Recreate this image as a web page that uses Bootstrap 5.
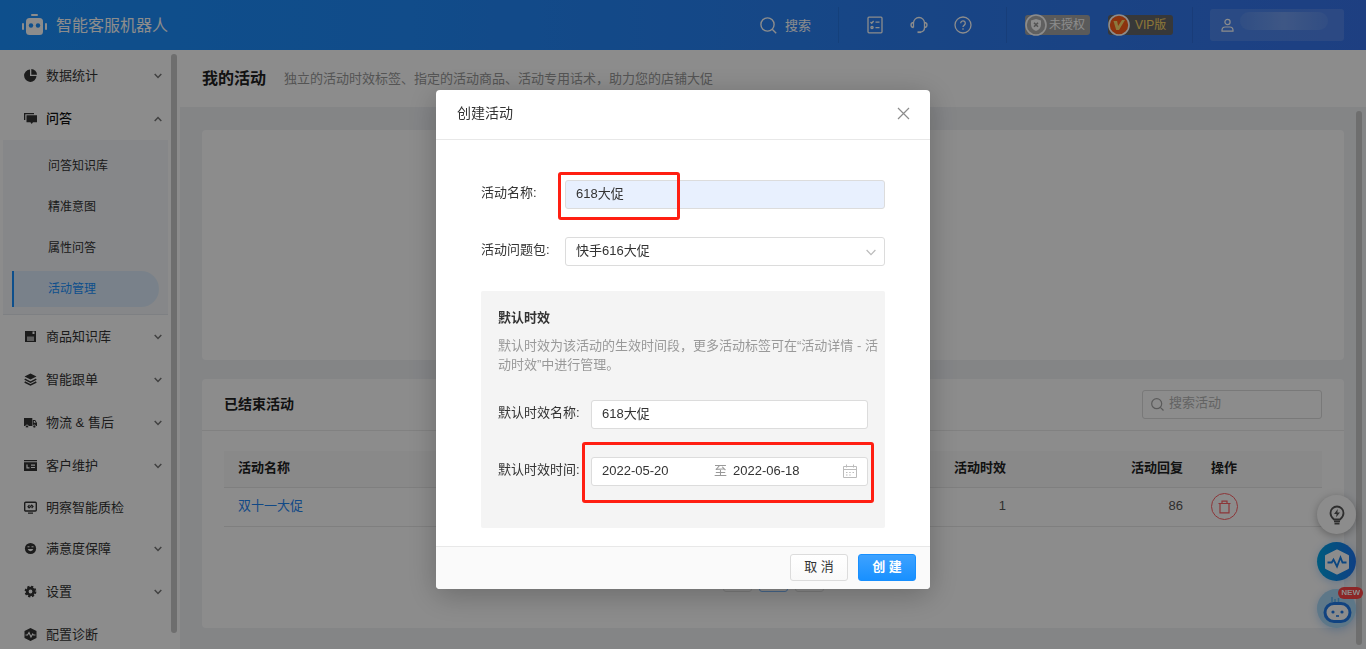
<!DOCTYPE html>
<html lang="zh-CN">
<head>
<meta charset="utf-8">
<meta name="viewport" content="width=device-width, initial-scale=1">
<title>智能客服机器人</title>
<link href="https://cdn.jsdelivr.net/npm/bootstrap@5.3.0/dist/css/bootstrap.min.css" rel="stylesheet">
<style>
  body { font-family: "Liberation Sans", "Noto Sans CJK SC", sans-serif; font-size: 13px; line-height: 19px; color: #333; background: #f0f2f5; }
  a { text-decoration: none; }
  .min-h-0 { min-height: 0; }

  /* top bar */
  .topbar { height: 50px; background: linear-gradient(90deg, #1b91ff, #1f8afb 30%, #3774ec); color: #fff; padding: 0 22px; }
  .topbar .brand-name { font-size: 16px; margin-left: 8px; color: #fff; }
  .topbar button { background: none; border: 0; color: #fff; padding: 0; display: flex; align-items: center; }
  .top-divider { width: 1px; height: 36px; background: rgba(0,0,0,.08); }
  .divider-search { margin-left: 27px; }
  .divider-user { margin: 0 17px 0 19px; }
  .tool-set { gap: 26px; margin: 0 34px 0 27px; }
  .plan-tag { position: relative; height: 20px; border-radius: 3px; font-size: 12px; padding: 0 5px 0 24px; line-height: 20px; width: 65px; white-space: nowrap; margin-left: 18px; }
  .plan-tag svg { position: absolute; left: 0; top: -1px; }
  .plan-plain { background: #a4a4a4; }
  .plan-vip { background: #656668; color: #ffd966; padding-left: 27px; }
  .topbar .user-box { width: 134px; height: 32px; border-radius: 3px; background: rgba(255,255,255,.13); padding: 0 11px; gap: 6px; }
  .user-mask { width: 88px; height: 18px; border-radius: 9px; background: linear-gradient(90deg, rgba(255,255,255,.06), rgba(255,255,255,.2) 50%, rgba(255,255,255,.06)); margin-bottom: 8px; }

  /* side menu */
  .side { width: 180px; background: #fff; }
  .side-menu { width: 171px; padding-top: 4px; overflow: hidden; }
  .side-link { height: 43px; flex: none; display: flex; align-items: center; color: #333; padding: 0 9px 0 24px; }
  .side-link svg:first-child { margin-right: 9px; }
  .side-link.leaf { height: 40px; }
  .side-link.open { color: #111; font-weight: 500; }
  .sub-menu { flex: none; margin: 0 3px; padding: 8px 9px 7px; background: #f4f6f9; border-bottom: 1px solid #e6e9ee; gap: 5px; }
  .sub-link { height: 36px; line-height: 36px; font-size: 12px; color: #333; padding-left: 36px; }
  .sub-link.current { color: #1890ff; background: #dcecfb; border-left: 2px solid #1890ff; border-radius: 0 18px 18px 0; padding-left: 34px; }
  .scroll-thumb { width: 6px; border-radius: 3px; background: #c9c9c9; flex: none; }

  /* content */
  .page-head { height: 57px; background: #fff; padding: 0 22px; gap: 18px; }
  .page-head h1 { font-size: 16px; font-weight: 700; margin: 0; color: #222; }
  .page-head p { margin: 0; color: #999; white-space: nowrap; }
  .page-body { padding: 23px 12px 21px 22px; }
  .panel { background: #fff; border-radius: 4px; }
  .panel-chart { height: 230px; }
  .panel-list { margin-top: 19px; }
  .panel-head { height: 52px; border-bottom: 1px solid #ebebeb; padding: 0 22px; }
  .panel-head h2 { font-size: 14px; font-weight: 700; margin: 0; color: #222; }
  .search-field { position: relative; width: 180px; }
  .search-field svg { position: absolute; left: 9px; top: 8px; }
  .ctl.form-control, .ctl.form-select { height: 29px; font-size: 13px; line-height: 19px; padding: 3px 10px 5px; border: 1px solid #dcdcdc; border-radius: 3px; color: #333; }
  .ctl.form-control { padding: 2px 10px 6px; }
  .search-field .ctl.form-control { padding-left: 26px; background: transparent; }
  .ctl.form-control::placeholder { color: #b5b5b5; }
  .event-table { margin: 20px 22px 0; width: calc(100% - 44px); table-layout: fixed; border-collapse: collapse; }
  .event-table th, .event-table td { padding: 0 14px; border-bottom: 1px solid #e8e8e8; }
  .event-table th { height: 36px; background: #fafafa; color: #222; padding-bottom: 3px; }
  .event-table td { height: 39px; color: #555; }
  .event-table td:not(:last-child) { padding-bottom: 3px; }
  .event-table a { color: #1f86f5; }
  .w-reply { width: 177px; }
  .w-act { width: 125px; }
  .del-btn { width: 27px; height: 27px; border: 1px solid #ff6266; border-radius: 50%; background: none; padding: 0; display: flex; align-items: center; justify-content: center; color: #ff6266; }
  .pager { gap: 7px; margin-top: 36px; padding-bottom: 36px; }
  .pager button { width: 29px; height: 29px; border: 1px solid #e2e2e2; border-radius: 3px; background: #fff; padding: 0; }
  .pager .on { border-color: #7fbcff; }

  /* floating helpers */
  .floats { position: fixed; right: 10px; bottom: 21px; gap: 8px; z-index: 1000; }
  .float-btn { position: relative; width: 39px; height: 39px; border: 0; border-radius: 50%; padding: 0; display: flex; align-items: center; justify-content: center; }
  .float-tip { background: #fff; box-shadow: 0 2px 8px rgba(0,0,0,.3); }
  .float-check { background: linear-gradient(90deg, #00a5e6, #1b74f0); box-shadow: 0 2px 8px rgba(30,130,240,.3); }
  .float-bot { background: #a9d9f7; box-shadow: 0 2px 8px rgba(30,130,240,.3); }
  .new-flag { position: absolute; right: -7px; top: -2px; height: 12px; line-height: 12px; border-radius: 6px; background: #ff4548; color: #fff; font-size: 8px; font-weight: 700; padding: 0 3px; }

  /* dialog */
  .modal-backdrop.show { opacity: .45; }
  .event-dialog.modal-dialog { max-width: 494px; margin: 90px auto 0; }
  .event-dialog .modal-content { border: 0; border-radius: 4px; box-shadow: 0 6px 30px rgba(0,0,0,.25); overflow: hidden; }
  .event-dialog .modal-header { height: 50px; border-bottom: 1px solid #e8e8e8; padding: 0 20px 2px 21px; }
  .event-dialog .modal-title { font-size: 14px; font-weight: 400; line-height: 20px; padding-bottom: 2px; }
  .close-x { border: 0; background: none; padding: 0; display: flex; color: #8c8c8c; }
  .event-dialog .modal-body { padding: 40px 45px 18px; }
  .field-row { display: flex; align-items: center; margin-bottom: 28px; }
  .field-row.before-box { margin-bottom: 25px; }
  .field-row > label { flex: none; width: 84px; padding-bottom: 5px; }
  .field-row > .field-slot { flex: 1; min-width: 0; position: relative; }
  .ctl.form-select { background-image: none; }
  .field-slot .caret { position: absolute; right: 9px; top: 12px; pointer-events: none; }
  .ctl.filled { background: #e8f0fe; }
  .sub-box { background: #f4f4f4; border-radius: 2px; padding: 17px 0 42px 17px; }
  .sub-box h3 { font-size: 13px; font-weight: 700; line-height: 19px; margin: 0 0 9px; }
  .sub-box p { color: #999; margin: 0 0 26px; }
  .sub-box .field-row { margin-right: 17px; }
  .sub-box .field-row > label { width: 93px; }
  .sub-box .field-row:last-child { margin-bottom: 0; }
  .date-range { height: 29px; background: #fff; border: 1px solid #dcdcdc; border-radius: 3px; padding: 0 10px 2px 10px; }
  .date-range input { border: 0; background: none; padding: 0; color: #333; width: 112px; flex: none; }
  .date-range input:last-of-type { width: 100px; }
  .date-range span { color: #999; margin-right: 6px; }
  .mark-box { position: absolute; border: 3px solid #ff1f12; border-radius: 3px; pointer-events: none; }
  .mark-name { left: -7px; top: -8px; width: 122px; height: 48px; }
  .mark-date { left: -9px; right: -6px; top: -15px; height: 61px; }
  .event-dialog .modal-footer { height: 43px; background: #fafafa; border-top: 1px solid #e8e8e8; padding: 0 14px 1px; gap: 10px; border-radius: 0; }
  .event-dialog .modal-footer .btn { margin: 0; width: 58px; height: 27px; font-size: 13px; line-height: 19px; padding: 0 0 2px; border-radius: 3px; border: 1px solid #dcdcdc; color: #333; background: linear-gradient(#fff, #f9f9f9); }
  .event-dialog .modal-footer .btn-create { background: linear-gradient(#3ea2ff, #1890ff); border-color: #1890ff; color: #fff; font-weight: 700; }
</style>
</head>
<body class="vh-100 d-flex flex-column overflow-hidden">

<svg class="d-none">
  <symbol id="down" viewBox="0 0 8 6"><path d="M.7 1 4 4.5 7.3 1" fill="none" stroke="#777" stroke-width="1.5"/></symbol>
</svg>

<header class="topbar d-flex align-items-center flex-shrink-0">
  <svg width="26" height="24" viewBox="0 0 26 24" fill="#fff"><rect x="9" y="1" width="7" height="2" rx="1"/><rect x="4" y="5" width="17" height="17" rx="3.5"/><rect x="0" y="10" width="2" height="7" rx="1"/><rect x="23" y="10" width="2" height="7" rx="1"/><circle cx="9" cy="12.500" r="2.2" fill="#1b91ff"/><circle cx="16" cy="12.500" r="2.2" fill="#1b91ff"/></svg>
  <span class="brand-name">智能客服机器人</span>

  <button type="button" class="ms-auto">
    <svg class="me-2" width="17" height="17" viewBox="0 0 17 17" fill="none" stroke="#fff" stroke-width="1.4"><circle cx="7.5" cy="7.5" r="6.6"/><path d="m12.2 12.2 4 4"/></svg>搜索
  </button>
  <div class="top-divider divider-search"></div>
  <div class="tool-set d-flex align-items-center">
    <button type="button"><svg width="18" height="18" viewBox="0 0 18 18" fill="none" stroke="#fff" stroke-width="1.3"><rect x="2" y="1.2" width="14" height="15.6" rx="1"/><path d="m4.5 6 1.200 1.200L7.600 5M9.500 6.200h4M9.500 11.600h4"/><circle cx="6" cy="11.600" r="1.100"/></svg></button>
    <button type="button"><svg width="18" height="18" viewBox="0 0 18 18" fill="none" stroke="#fff" stroke-width="1.300"><path d="M3.500 11.500V7a5.500 5.500 0 0 1 11 0v4.500c0 2.600-1.500 4.200-3.700 4.600M3.500 6.500C1.800 6.600 1 7.500 1 9s.8 2.400 2.500 2.500M14.500 6.500C16.200 6.600 17 7.500 17 9s-.8 2.400-2.500 2.500"/><path d="M7.500 16.200h3.500" stroke-width="1.800"/></svg></button>
    <button type="button"><svg width="18" height="18" viewBox="0 0 18 18" fill="none" stroke="#fff" stroke-width="1.3"><circle cx="9" cy="9" r="8"/><path d="M6.700 7.200a2.300 2.300 0 1 1 3.600 1.900c-.9.6-1.300 1-1.300 1.900M9 12.200v1.500"/></svg></button>
  </div>
  <div class="top-divider"></div>
  <div class="plan-tag plan-plain"><svg width="22" height="22" viewBox="0 0 22 22"><circle cx="11" cy="11" r="10" fill="#b0b0b0" stroke="#fff" stroke-width="1.600"/><path d="M11 5l5 1.600v4.200c0 3-2 5-5 6.200-3-1.200-5-3.200-5-6.200V6.600z" fill="#fff"/><path d="m9 8.700 4 4m0-4-4 4" stroke="#999" stroke-width="1.600"/></svg>未授权</div>
  <div class="plan-tag plan-vip"><svg width="22" height="22" viewBox="0 0 22 22"><circle cx="11" cy="11" r="10" fill="#ff5d1b" stroke="#fff" stroke-width="1.600"/><path d="M5.500 7h3.600l1 5L14 6h3l-6 10H8.200z" fill="#ffdd70"/></svg>VIP版</div>
  <div class="top-divider divider-user"></div>
  <button type="button" class="user-box">
    <svg width="13" height="15" viewBox="0 0 13 15" fill="none" stroke="#fff" stroke-width="1.200"><circle cx="6.500" cy="4" r="2.600"/><path d="M1 13.200v-1c0-2 1.400-3.200 3.200-3.200h4.600c1.800 0 3.200 1.200 3.200 3.200v1z"/></svg>
    <span class="user-mask"></span>
  </button>
</header>

<div class="d-flex flex-grow-1 min-h-0">
  <aside class="side d-flex flex-shrink-0">
    <nav class="side-menu d-flex flex-column">
      <a class="side-link" href="#"><svg width="13" height="13" viewBox="0 0 13 13" fill="#333"><path d="M6 .5V7h6.500A6.200 6.200 0 1 1 6 .5z"/><path d="M7.300 0A5.800 5.800 0 0 1 13 5.700H7.300z"/></svg>数据统计<svg class="ms-auto" width="8" height="6"><use href="#down"/></svg></a>
      <a class="side-link open" href="#"><svg width="13" height="13" viewBox="0 0 13 13" fill="#333"><path d="M0 1h10v1.300H1.300V8H0z"/><path d="M2.500 3.300H13v7H9l-1.300 1.600L6.400 10.300H2.500z"/></svg>问答<svg class="ms-auto" width="8" height="6" viewBox="0 0 8 6"><path d="M.7 5 4 1.500 7.300 5" fill="none" stroke="#777" stroke-width="1.500"/></svg></a>
      <div class="sub-menu d-flex flex-column">
        <a class="sub-link" href="#">问答知识库</a>
        <a class="sub-link" href="#">精准意图</a>
        <a class="sub-link" href="#">属性问答</a>
        <a class="sub-link current" href="#">活动管理</a>
      </div>
      <a class="side-link" href="#"><svg width="13" height="13" viewBox="0 0 13 13"><path d="M1 1h11v11H1z" fill="#333"/><path d="M3 6.500h7V11H3z" fill="#aaa"/><path d="M8.500 1.500h2V4h-2z" fill="#fff"/></svg>商品知识库<svg class="ms-auto" width="8" height="6"><use href="#down"/></svg></a>
      <a class="side-link" href="#"><svg width="13" height="13" viewBox="0 0 13 13"><path d="M6.500.5 12.500 3.500l-6 3-6-3z" fill="#333"/><path d="m.7 6.200 5.800 3 5.800-3M.7 9l5.800 3 5.800-3" fill="none" stroke="#333" stroke-width="1.500"/></svg>智能跟单<svg class="ms-auto" width="8" height="6"><use href="#down"/></svg></a>
      <a class="side-link" href="#"><svg width="13" height="13" viewBox="0 0 13 13"><path d="M0 2h8.300v8H0zM8.800 4h2.400L13 7v3H8.800z" fill="#333"/><circle cx="3" cy="10.500" r="1.500" fill="#333" stroke="#fff" stroke-width=".8"/><circle cx="10.300" cy="10.500" r="1.500" fill="#333" stroke="#fff" stroke-width=".8"/><path d="M9.800 5h1l1 1.800h-2z" fill="#fff"/></svg>物流 &amp; 售后<svg class="ms-auto" width="8" height="6"><use href="#down"/></svg></a>
      <a class="side-link" href="#"><svg width="13" height="13" viewBox="0 0 13 13"><path d="M0 1h13v1.300H0zM0 3.200h13V12H0z" fill="#333"/><path d="M3 5.500v3.300h2.500M7 6.200h4M7 8.500h4" stroke="#fff" stroke-width="1.200" fill="none"/></svg>客户维护<svg class="ms-auto" width="8" height="6"><use href="#down"/></svg></a>
      <a class="side-link leaf" href="#"><svg width="13" height="13" viewBox="0 0 13 13" fill="none" stroke="#333" stroke-width="1.400"><rect x=".7" y="1.200" width="11.600" height="8.800" rx="1"/><path d="M4 12.200h5M5.500 4 4 5.700l1.300 1.500M7.500 4 9 5.500 7.600 7.200M5 7l3-3" stroke-width="1.200"/></svg>明察智能质检</a>
      <a class="side-link" href="#"><svg width="13" height="13" viewBox="0 0 13 13"><circle cx="6.500" cy="6.500" r="5.600" fill="#333"/><path d="M3.700 7a2.900 2.900 0 0 0 5.600 0z" fill="#fff"/><path d="M3.500 4.800h2M7.500 4.800h2" stroke="#fff"/></svg>满意度保障<svg class="ms-auto" width="8" height="6"><use href="#down"/></svg></a>
      <a class="side-link" href="#"><svg width="13" height="13" viewBox="0 0 13 13"><circle cx="6.500" cy="6.500" r="3.300" fill="none" stroke="#333" stroke-width="2.800"/><circle cx="6.500" cy="6.500" r="5" fill="none" stroke="#333" stroke-width="1.800" stroke-dasharray="2.200 1.727"/></svg>设置<svg class="ms-auto" width="8" height="6"><use href="#down"/></svg></a>
      <a class="side-link" href="#"><svg width="13" height="13" viewBox="0 0 13 13"><path d="m6.500 0 6 3v7l-6 3-6-3V3z" fill="#333"/><path d="M1.500 7h2l1.500-2.500 2 4.500 1.700-3 .8 1h2" fill="none" stroke="#fff" stroke-width="1.100"/></svg>配置诊断</a>
    </nav>
    <div class="scroll-thumb mt-1 mb-3"></div>
  </aside>

  <main class="flex-fill d-flex flex-column overflow-hidden">
    <div class="page-head d-flex align-items-center flex-shrink-0">
      <h1>我的活动</h1>
      <p>独立的活动时效标签、指定的活动商品、活动专用话术，助力您的店铺大促</p>
    </div>
    <div class="d-flex flex-grow-1 min-h-0">
      <div class="page-body flex-grow-1">
        <section class="panel panel-chart"></section>
        <section class="panel panel-list">
          <div class="panel-head d-flex align-items-center justify-content-between">
            <h2>已结束活动</h2>
            <div class="search-field">
              <svg width="13" height="13" viewBox="0 0 13 13" fill="none" stroke="#a5a5a5" stroke-width="1.200"><circle cx="5.700" cy="5.700" r="5"/><path d="m9.300 9.300 3.200 3.200"/></svg>
              <input type="text" class="form-control ctl" placeholder="搜索活动" aria-label="搜索活动">
            </div>
          </div>
          <table class="event-table">
            <thead><tr><th>活动名称</th><th class="text-end">活动时效</th><th class="text-end w-reply">活动回复</th><th class="w-act">操作</th></tr></thead>
            <tbody><tr><td><a href="#">双十一大促</a></td><td class="text-end">1</td><td class="text-end">86</td>
              <td><button type="button" class="del-btn"><svg width="13" height="14" viewBox="0 0 13 14" fill="none" stroke="currentColor" stroke-width="1.200"><path d="M.5 3.500h12M4 3.500V1.200h5v2.300M2 3.500v9.300h9V3.500"/></svg></button></td></tr></tbody>
          </table>
          <div class="pager d-flex justify-content-center"><button type="button"></button><button type="button" class="on"></button><button type="button"></button></div>
        </section>
      </div>
      <div class="scroll-thumb mt-1 mb-1 me-1"></div>
    </div>
  </main>
</div>

<div class="floats d-flex flex-column">
  <button type="button" class="float-btn float-tip"><svg width="16" height="20" viewBox="0 0 16 20" fill="none" stroke="#555" stroke-width="1.800"><path d="M5 14.500C2.500 12.500 1.500 10.500 1.500 8a6.500 6.500 0 0 1 13 0c0 2.500-1 4.500-3.500 6.500z"/><path d="M5 16.300h6M5.500 18.700h5"/><path d="M8.800 4 5 9h2.600l-.5 3.300L11 7.500H8.400z" fill="#555" stroke="none"/></svg></button>
  <button type="button" class="float-btn float-check"><svg width="26" height="26" viewBox="0 0 26 26"><path d="M13 1.500 24 7v12l-11 5.500L2 19V7z" fill="#fff" stroke="#fff" stroke-width="2" stroke-linejoin="round"/><path d="M3.500 13.500h4.200L9.500 10.500l3.500 7 3.500-9 2 5h4" fill="none" stroke="#1580ea" stroke-width="1.800"/></svg></button>
  <button type="button" class="float-btn float-bot"><svg width="30" height="30" viewBox="0 0 30 30"><path d="M10 3v5M13 5v4M16.500 4v5" stroke="#5ab2f2" stroke-width="1.500"/><rect x="3" y="9.500" width="25" height="18" rx="9" fill="#fff" stroke="#1f7bea" stroke-width="3"/><circle cx="11" cy="18" r="1.600" fill="#1f7bea"/><circle cx="20" cy="18" r="1.600" fill="#1f7bea"/><path d="M14 22h3" stroke="#1f7bea" stroke-width="1.600"/></svg><span class="new-flag">NEW</span></button>
</div>

<div class="modal-backdrop show"></div>
<div class="modal show d-block" tabindex="-1" role="dialog">
  <div class="modal-dialog event-dialog">
    <form class="modal-content">
      <div class="modal-header">
        <h5 class="modal-title">创建活动</h5>
        <button type="button" class="close-x" data-bs-dismiss="modal"><svg width="13" height="13" viewBox="0 0 13 13" fill="none" stroke="currentColor" stroke-width="1.200"><path d="m1 1 11 11M12 1 1 12"/></svg></button>
      </div>
      <div class="modal-body">
        <div class="field-row">
          <label for="evName">活动名称:</label>
          <div class="field-slot"><input id="evName" type="text" class="form-control ctl filled" value="618大促"><div class="mark-box mark-name"></div></div>
        </div>
        <div class="field-row before-box">
          <label for="evPack">活动问题包:</label>
          <div class="field-slot">
            <select id="evPack" class="form-select ctl"><option>快手616大促</option></select>
            <svg class="caret" width="10" height="7" viewBox="0 0 10 7" fill="none" stroke="#bbb" stroke-width="1.200"><path d="M.6 1 5 5.700 9.400 1"/></svg>
          </div>
        </div>
        <div class="sub-box">
          <h3>默认时效</h3>
          <p>默认时效为该活动的生效时间段，更多活动标签可在“活动详情 - 活动时效”中进行管理。</p>
          <div class="field-row">
            <label for="defName">默认时效名称:</label>
            <div class="field-slot"><input id="defName" type="text" class="form-control ctl" value="618大促"></div>
          </div>
          <div class="field-row">
            <label for="defFrom">默认时效时间:</label>
            <div class="field-slot">
              <div class="date-range d-flex align-items-center">
                <input id="defFrom" type="text" value="2022-05-20"><span>至</span><input type="text" value="2022-06-18" aria-label="至">
                <svg class="ms-auto flex-shrink-0" width="14" height="14" viewBox="0 0 14 14" fill="none" stroke="#bbb"><path d="M.5 2.500h13v11H.5zM.5 5.500h13M3.500.5v3M10.500.5v3"/><path d="M3 8.500h1.500M6.200 8.500h1.500M9.500 8.500H11M3 11h1.500M6.200 11h1.500" stroke-width="1.200"/></svg>
              </div>
              <div class="mark-box mark-date"></div>
            </div>
          </div>
        </div>
      </div>
      <div class="modal-footer">
        <button type="button" class="btn" data-bs-dismiss="modal">取 消</button>
        <button type="button" class="btn btn-create">创 建</button>
      </div>
    </form>
  </div>
</div>

<script src="https://cdn.jsdelivr.net/npm/bootstrap@5.3.0/dist/js/bootstrap.bundle.min.js"></script>
</body>
</html>
